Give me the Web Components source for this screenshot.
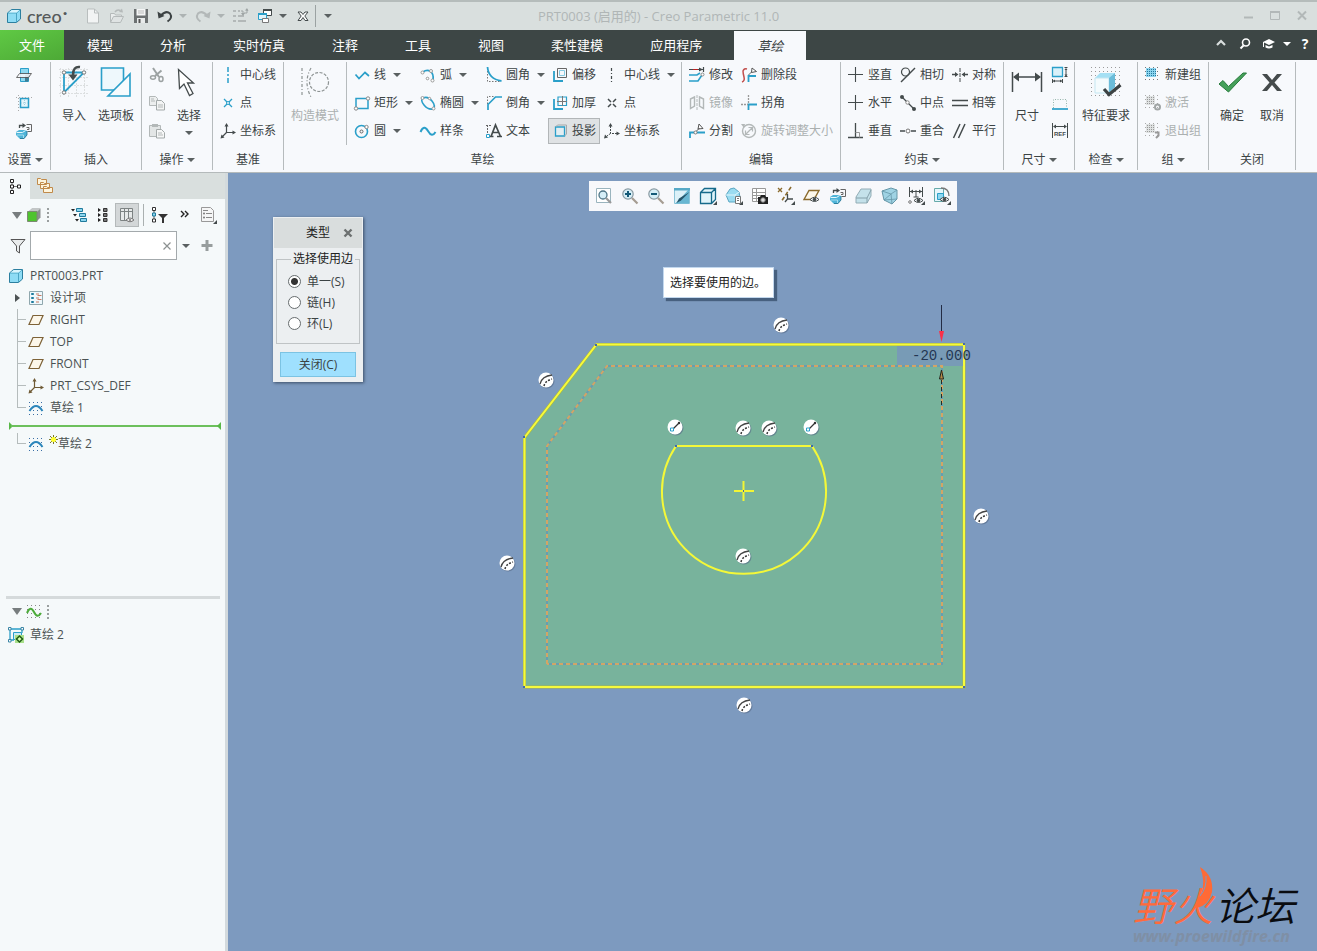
<!DOCTYPE html>
<html lang="zh-CN">
<head>
<meta charset="utf-8">
<title>PRT0003 (启用的) - Creo Parametric 11.0</title>
<style>
  html, body { margin: 0; height: 100%; }
  body { font: 12px/16px "Open Sans", "Noto Sans CJK SC", sans-serif; color: #3b4344; background: #f7f9fc; }
</style>
</head>
<body>
<creo-app></creo-app>
<script>
const C = '#2a9fc9', K = '#444b4c', G = '#b3b8b8', B = '#8a6a2c';
const dots = (x0, y0, x1, y1, step, fill) => {
  let s = '';
  for (let y = y0; y <= y1; y += step) for (let x = x0; x <= x1; x += step) s += `<rect x="${x}" y="${y}" width="1" height="1" fill="${fill}"/>`;
  return s;
};
const cube = `<path d="M1.500 5l4-3.500h9v9.500l-4 3.500h-9z" fill="#8edcf5" stroke="#2c7f9f"/><path d="M1.500 5h9v9.500M10.500 5l4-3.500" fill="none" stroke="#4aa5c4"/><path d="M2.500 4.500l3.500-2.500h7.500l-3 2.500z" fill="#d9f5fd"/>`;
const smallCsys = c => `<path d="M6.500 2v7.500H14M6.500 9.500L2 14" fill="none" stroke="${c}" stroke-width="1.200"/><path d="M6.500 0L4.500 3.500h4zM16 9.500l-3.500-2v4zM0.500 15.500l1-4 3 3z" fill="${c}"/>`;
const eye = `<path d="M7 12.500q4.500-4.500 9 0q-4.500 4-9 0z" fill="#f7f9fc" stroke="${K}"/><circle cx="11.500" cy="12.500" r="1.800" fill="${K}"/>`;
const corner = `<path d="M18 14v4h-4z" fill="${K}"/>`;
const refit = `<path d="M3.500 5V2.500h4" fill="none" stroke="${K}" stroke-width="1.300"/><path d="M10 2.500l-3.500-2.500v5z" fill="${K}"/><path d="M10.500 1.500h5v7h-4M10.500 4.500h2.500v2h-2" fill="none" stroke="#666"/><path d="M0 9l3-2h6l2 1v4l-3 4H4l-4-4z" fill="#4fb4d8"/><path d="M.5 9.500h6l3-2" fill="none" stroke="#e6f8fd"/><path d="M1 12h6.500v3.500" fill="none" stroke="#b9e6f4" stroke-width=".8"/><path d="M4 15.500h4l3-3.500V8" fill="none" stroke="#22708f" stroke-width=".8"/>`;
const ICONS = {
  cube: [16, cube],
  file: [16, `<path d="M2.500 1h7l4 4v10h-11z" fill="#f2f4f4" stroke="#b9bebe"/><path d="M9.500 1v4h4" fill="none" stroke="#b9bebe"/>`],
  open: [16, `<path d="M1.500 14V5.500h4l1 1.500h6v2" fill="#e9ecec" stroke="#b5baba"/><path d="M1.500 14.500l3-6h10l-3 6z" fill="#dfe3e3" stroke="#b5baba"/><path d="M6 4q2-3 5.500-1.500" fill="none" stroke="#b5baba" stroke-width="1.500"/><path d="M14 4.500l-4-.5 3-3.500z" fill="#b5baba"/>`],
  save: [16, `<path d="M1 1h14v14H1z" fill="#6c7172"/><path d="M3.500 1h9v6.500h-9z" fill="#f4f6f6"/><path d="M5 3h6M5 5h6" stroke="#bbb"/><path d="M4 10h8v5H4z" fill="#e8ebeb"/><path d="M5.500 11h2v4h-2z" fill="#555"/>`],
  undo: [16, `<path d="M4 7.500Q9 2 13 5.500Q16 10 10.500 13.500" fill="none" stroke="#3c4243" stroke-width="2"/><path d="M0.500 3.500l1 7 6-2.500z" fill="#3c4243"/>`],
  redo: [16, `<path d="M12 7.500Q7 2 3 5.500Q0 10 5.500 13.500" fill="none" stroke="${G}" stroke-width="2"/><path d="M15.500 3.500l-1 7-6-2.500z" fill="${G}"/>`],
  regen: [16, `<path d="M1 3h3M1 8h3M1 13h3M6 8h6M6 13h8M6 3h2" stroke="${G}" stroke-width="2"/><path d="M9 3h2v3M15 1v4h-3" fill="none" stroke="#9fa5a5"/><path d="M9 5h4l-2 3zM13 2.500l2-2.500 1.500 3z" fill="#9fa5a5"/>`],
  windows: [16, `<path d="M6.500 1.500h8v6h-8z" fill="#fff" stroke="${K}"/><path d="M6 2h9" stroke="${K}" stroke-width="2"/><path d="M1.500 5.500h8v6h-8z" fill="#dff4fb" stroke="${C}"/><path d="M1 6h9" stroke="${C}" stroke-width="2"/><path d="M5.500 10.500h6v4h-6z" fill="#fff" stroke="#777"/>`],
  closewin: [16, `<path d="M3 4h3l2 2.500L10 4h3l-3.200 4 3.200 4.500h-3L8 9.500 6 12.500H3L6.200 8z" fill="#fff" stroke="${K}"/>`],
  min: [16, `<path d="M4 9.500h9" stroke="#b2b8b8" stroke-width="2"/>`],
  max: [16, `<path d="M3.500 3.500h9v8h-9z" fill="none" stroke="#b2b8b8"/><path d="M3 4h10" stroke="#b2b8b8" stroke-width="2"/>`],
  close: [16, `<path d="M4 3.500l8 8M12 3.500l-8 8" stroke="#b2b8b8" stroke-width="2"/>`],
  xdark: [16, `<path d="M4.500 4.500l7 7M11.500 4.500l-7 7" stroke="#6c7070" stroke-width="2.400"/>`],
  xthin: [16, `<path d="M4.500 4.500l7 7M11.500 4.500l-7 7" stroke="#8c9191" stroke-width="1.200"/>`],
  up: [16, `<path d="M4 9l4-4 4 4" fill="none" stroke="#d9dede" stroke-width="2.200"/>`],
  find: [16, `<circle cx="9" cy="6.500" r="3.500" fill="none" stroke="#fff" stroke-width="1.600"/><path d="M6.500 9.500L3.500 12.500" stroke="#fff" stroke-width="2"/>`],
  learn: [16, `<path d="M2 6l6-3 6 3-6 3z" fill="#fff"/><path d="M4.500 9v2.500q3.500 2 7 0V9L8 10.500z" fill="#fff"/><path d="M2.500 6v5" stroke="#fff"/>`],
  setPlane: [16, `<path d="M4.500 1.500h8v13h-8z" fill="#8fd9f0" stroke="${C}"/><path d="M9 8l5-1-2 7.500H9z" fill="#3f7d92"/><path d="M0.500 10.500l3-4h12l-3 4z" fill="#f7f9fc" stroke="#555" opacity=".85"/>`],
  setRefs: [16, `<path d="M4.500 3.500h8v9h-8z" fill="#e3f5fb" stroke="${C}" stroke-width="1.500"/><path d="M2.500 0v16M0 2.500h16" stroke="#aaa" stroke-dasharray="1 2" fill="none"/><path d="M8.500 5v6M5 8h7" stroke="#9fcddd" stroke-dasharray="1 1"/>`],
  refit: [16, refit],
  import: [32, `<path d="M2.500 2v29M10.500 2v29M18.500 2v29M26.500 2v29M1 3.500h30M1 11.500h30M1 19.500h30M1 27.500h30" stroke="#dcdfe0" stroke-dasharray="2 1"/><path d="M6 6.500h20L6 26.500z" fill="none" stroke="${C}" stroke-width="1.800"/><path d="M22 1q-7-1-7 8" fill="none" stroke="${K}" stroke-width="2.500"/><path d="M10.500 8.500h9l-4.500 6z" fill="${K}"/><g fill="#fff" stroke="#777"><circle cx="6" cy="6.500" r="1.700"/><circle cx="26" cy="6.500" r="1.700"/><circle cx="6" cy="26.500" r="1.700"/></g>`],
  palette: [32, `<path d="M1.500 2h22v22h-22z" fill="#eef8fc" stroke="${C}" stroke-width="1.600"/><path d="M30 8v22H8z" fill="#f7fbfd" stroke="${C}" stroke-width="1.600"/>`],
  cut: [16, `<path d="M4 1l6 9M12.500 3.500L6 9" stroke="#9ca2a2" stroke-width="2" fill="none"/><ellipse cx="4" cy="10.500" rx="2.500" ry="1.700" fill="none" stroke="#9ca2a2" stroke-width="1.500"/><ellipse cx="12" cy="12" rx="2" ry="2.500" fill="none" stroke="#9ca2a2" stroke-width="1.500"/>`],
  copy: [16, `<path d="M.5 1.500h6l2 2v7h-8z" fill="#eceeee" stroke="${G}"/><path d="M7.500 5.500h5l3 3v6.500h-8z" fill="#f3f4f4" stroke="#a4aaaa"/><path d="M2 4h3M2 6h4M9 10h5M9 12h5" stroke="${G}"/>`],
  paste: [16, `<path d="M.5 2.500h11v11H.5z" fill="#e3e6e6" stroke="${G}"/><path d="M3 1h6v3H3z" fill="${G}"/><path d="M7.500 6.500h5l3 3v5.500h-8z" fill="#f6f7f7" stroke="#a4aaaa"/><path d="M9 10h4M9 12h5" stroke="${G}"/>`],
  select: [32, `<path d="M5.500 3.500l1 19 4.500-4.500 5.500 11.500 3.500-2-5.500-10.500h6z" fill="#fff" stroke="${K}" stroke-width="1.300"/>`],
  dcenter: [16, `<path d="M8 0v16" stroke="${C}" stroke-width="1.500" stroke-dasharray="5 2 2 2"/>`],
  dpoint: [16, `<path d="M4 4l3 3M12 4L9 7M4 12l3-3M12 12L9 9" stroke="${C}" stroke-width="1.300"/><circle cx="8" cy="8" r="1.500" fill="none" stroke="${C}"/>`],
  csys: [16, smallCsys(K)],
  construct: [32, `<g fill="none" stroke="#8d9393" stroke-width="1.200"><path d="M3 2v29M12 2q-8 14 0 29" stroke-dasharray="3 2 1 2"/><circle cx="20" cy="16" r="9.500" stroke-dasharray="3 1.500"/></g>`],
  line: [16, `<path d="M1.500 7.500l3.500 4 6-6 4 3.500" fill="none" stroke="${C}" stroke-width="1.700"/>`],
  rect: [16, `<path d="M2 3.500h12v10H2z" fill="none" stroke="${C}" stroke-width="1.500"/><circle cx="14" cy="3.500" r="1.700" fill="#fff" stroke="#888"/><circle cx="2" cy="13.500" r="1.700" fill="#fff" stroke="#888"/>`],
  circle: [16, `<circle cx="7.500" cy="8.500" r="6" fill="none" stroke="${C}" stroke-width="1.600"/><circle cx="7.500" cy="8.500" r="1.500" fill="none" stroke="#666"/><circle cx="12.500" cy="4" r="1.700" fill="#fff" stroke="#888"/>`],
  arc: [16, `<path d="M3 5Q7 2 10.500 4.500T13 13" fill="none" stroke="${C}" stroke-width="1.700"/><g fill="#fff" stroke="#999"><circle cx="2.500" cy="5.500" r="1.500"/><circle cx="12.500" cy="13.500" r="1.500"/><circle cx="7.500" cy="11.500" r="1.300"/><circle cx="11" cy="4" r="1.500"/></g>`],
  ellipse: [16, `<path d="M3 3q5-2 9 3t1 8q-5 1-9-4T3 3z" fill="none" stroke="${C}" stroke-width="1.600"/><g fill="#fff" stroke="#999"><circle cx="2.500" cy="3" r="1.500"/><circle cx="13.500" cy="13.500" r="1.500"/><circle cx="9.500" cy="3.500" r="1.200"/></g>`],
  spline: [16, `<path d="M.5 9q3.500-8 7.500-1t7.500 1" fill="none" stroke="${C}" stroke-width="2"/>`],
  fillet: [16, `<path d="M1.500 1v13.500H15" fill="none" stroke="#777" stroke-dasharray="1.500 1.500"/><path d="M1.500 0q1 12 14 14" fill="none" stroke="${C}" stroke-width="1.800"/>`],
  chamfer: [16, `<path d="M1.500 9V1.500H9" fill="none" stroke="#777" stroke-dasharray="1.500 1.500"/><path d="M2 15V9.500L9.500 2H16" fill="none" stroke="${C}" stroke-width="1.700"/>`],
  offset: [16, `<path d="M5.500 1.500h9v9h-9z" fill="none" stroke="#666"/><path d="M2 4v10h9" fill="none" stroke="${C}" stroke-width="1.800"/><path d="M7.500 3.500h5v5h-5z" fill="none" stroke="#88cbe2"/>`],
  thicken: [16, `<path d="M6 2h8.500v8.500H6z" fill="none" stroke="${C}" stroke-width="1.200"/><path d="M2 4v10h9" fill="none" stroke="${C}" stroke-width="1.800"/><path d="M10.500 1v10M5 6.500h10" stroke="#777"/>`],
  text: [16, `<path d="M1.500 13V2M0 2.500h5" stroke="#666" stroke-dasharray="2 1"/><path d="M5 13.500L9.500 2l5 11.500M7 9.500h5.500M3.500 13.500h4M11 13.500h5" fill="none" stroke="${K}" stroke-width="1.700"/><path d="M.5 11.500h3v3h-3z" fill="#fff" stroke="${C}"/>`],
  project: [16, `<path d="M3.500 4h9v9h-9z" fill="#e3eef2" stroke="${C}" stroke-width="1.300"/><path d="M3.500 4l2-2h9v9l-2 2" fill="none" stroke="#a5a9aa"/>`],
  center: [16, `<path d="M7.500 1v14" stroke="${K}" stroke-width="1.200" stroke-dasharray="3 2 1 2"/>`],
  point: [16, `<path d="M4 4l3 3M12 4L9 7M4 12l3-3M12 12L9 9" stroke="${K}" stroke-width="1.500"/>`],
  csysd: [16, `<path d="M6.500 3v7.500H13M6.500 10.500L3 13" fill="none" stroke="${K}" stroke-dasharray="2 1"/><path d="M6.500 0L4.500 3.500h4zM16 10.500l-3.500-2v4zM0 15.500l1-4 3 3z" fill="${K}"/>`],
  modify: [16, `<path d="M0 2.500h15M14.500 0v5" fill="none" stroke="${K}" stroke-width="1.200"/><path d="M14 2.500l-4-2v4z" fill="${K}"/><path d="M4 2.500h5" stroke="#b22"/><path d="M0 8h8l3-2M0 14h9l4-6" fill="none" stroke="${C}" stroke-width="1.600"/><circle cx="13.500" cy="7.500" r="1.500" fill="#fff" stroke="#888"/>`],
  delseg: [16, `<path d="M1 15q3-1 2-5t-1-6q1-3 4-2" fill="none" stroke="#c2504e" stroke-width="1.500"/><path d="M7.500 15V9h7.500" fill="none" stroke="${C}" stroke-width="1.800"/><path d="M7.500 8l4-4" stroke="#666"/><path d="M11 1l4.500 3.500-5 1z" fill="#fff" stroke="#555"/>`],
  mirror: [16, `<path d="M1.500 4l4-2v9l-4 2.500zM14.500 4l-4-2v9l4 2.500z" fill="none" stroke="${G}" stroke-width="1.400"/><path d="M8 0v16" stroke="${G}" stroke-dasharray="3 1"/>`],
  cornr: [16, `<path d="M7.500 15V9.500H16" fill="none" stroke="${C}" stroke-width="1.800"/><path d="M7.500 0v8M0 9.500h7" stroke="#999" stroke-width="1.300" stroke-dasharray="2 1"/>`],
  divide: [16, `<path d="M1 15V9.500h4M8 9.500h8" fill="none" stroke="${C}" stroke-width="1.800"/><circle cx="6.500" cy="9.500" r="1.500" fill="#fff" stroke="#777"/><path d="M7.500 8l3-3M10 1l4 4.500-5 .5z" fill="#fff" stroke="#555"/>`],
  rotate: [16, `<circle cx="8" cy="8" r="6.500" fill="none" stroke="${G}" stroke-width="1.400"/><path d="M5 11l6-6M7.500 4.500h4v4M4.500 7.500v4h4" fill="none" stroke="${G}" stroke-width="1.200"/><path d="M0 1h4l-1 4z" fill="${G}"/>`],
  plus: [16, `<path d="M7.500 0v15M0 7.500h15" stroke="${K}" stroke-width="1.100"/>`],
  perp: [16, `<path d="M7.500 0v14M0 14.500h15" stroke="${K}" stroke-width="1.300"/><path d="M7.500 9.500h4v5" fill="none" stroke="#999"/>`],
  tangent: [16, `<circle cx="5.500" cy="5" r="4" fill="none" stroke="${K}" stroke-width="1.200"/><path d="M1 15L15 1" stroke="${K}" stroke-width="1.400"/>`],
  mid: [16, `<path d="M2.500 2.500l11 11" stroke="${K}" stroke-width="1.300"/><circle cx="2" cy="2" r="2" fill="${K}"/><circle cx="14" cy="14" r="2" fill="${K}"/><circle cx="7.500" cy="7.500" r="1.700" fill="#fff" stroke="#888"/>`],
  coin: [16, `<path d="M0 8h5M11 8h5" stroke="${K}" stroke-width="1.500"/><circle cx="8" cy="8" r="2" fill="#fff" stroke="#777"/>`],
  sym: [16, `<path d="M8 1v14" stroke="${K}" stroke-dasharray="4 1"/><path d="M0 7.500h4M12 7.500h4" stroke="${K}" stroke-width="1.500"/><path d="M6.500 7.500L3 5v5zM9.500 7.500L13 5v5z" fill="${K}"/>`],
  equal: [16, `<path d="M0 5.500h16M0 10.500h16" stroke="${K}" stroke-width="1.500"/>`],
  para: [16, `<path d="M1.500 15L8 1M6.500 15L13 1" stroke="${K}" stroke-width="1.500"/>`],
  dim: [32, `<path d="M1.500 6v20M30.500 6v20M5 11h22" stroke="${K}" stroke-width="1.500"/><path d="M2 11l6-4.500v9zM30 11l-6-4.500v9z" fill="${K}"/>`],
  perim: [16, `<path d="M.5.500h10v9H.5z" fill="#d9f1fa" stroke="${C}" stroke-width="1.300"/><path d="M12.500.5h3M12.500 9.500h3M14 2v7M.5 12v4M10.500 12v4M1 14h9" fill="none" stroke="${K}"/><path d="M1 14l2-1.500v3zM10 14l-2-1.500v3zM14 1l-1.500 2h3zM14 9.500L12.500 7.500h3z" fill="${K}"/>`],
  baseline: [16, `<path d="M1.500 13V4.500h13V13" fill="none" stroke="#98b6ad" stroke-dasharray="1 1.500"/><path d="M0 14h16" stroke="${C}" stroke-width="1.700"/>`],
  ref: [16, `<path d="M.5 0v15M15.500 0v15M2 3.500h12" stroke="${K}"/><path d="M1 3.500L4 1.500v4zM15 3.500l-3-2v4z" fill="${K}"/><text x="2" y="13" font-family="Liberation Sans, sans-serif" font-size="6" font-weight="700" fill="${K}">REF</text>`],
  check: [32, dots(1, 1, 31, 31, 4, '#9a9a9a') + `<path d="M5 12l5-5h15v14l-6 6H5z" fill="#a5e0f4"/><path d="M5 12h14v15H5z" fill="#f4fbfd" stroke="#c4e6f1"/><path d="M19 12l6-5v14l-6 6z" fill="#6bbcd9"/><path d="M14 23l5 5.500L30.500 19" fill="none" stroke="#3c4243" stroke-width="3.200"/>`],
  newgrp: [16, dots(0, 0, 15, 15, 4, '#777') + `<path d="M1 1h10v9H1z" fill="#8dd5ee"/>` + dots(2, 2, 10, 9, 2, '#2278a0')],
  actgrp: [16, dots(0, 0, 15, 15, 4, '#aaa') + `<path d="M1 1h9v9H1z" fill="#dfe2e2"/>` + dots(2, 2, 9, 9, 2, '#999') + `<circle cx="12.500" cy="12" r="2.500" fill="none" stroke="#a0a5a5" stroke-width="2"/>`],
  exitgrp: [16, dots(0, 0, 15, 15, 4, '#aaa') + `<path d="M1 1h9v9H1z" fill="#dfe2e2"/>` + dots(2, 2, 9, 9, 2, '#999') + `<path d="M10 9.500h3.500v3L11 15" fill="none" stroke="#999" stroke-width="2"/>`],
  ok: [32, `<path d="M3 18l4-3.500 5.500 6L27 7h3.500L12.500 26z" fill="#45a05a" stroke="#277a3b"/>`],
  cancel: [32, `<path d="M6 8h5l5 6 5-6h5l-7.500 8.500L26 25h-5l-5-6-5 6H6l7.500-8.500z" fill="#454b4c"/>`],
  treeTab: [16, `<path d="M5 3v11M5 8.500h5" stroke="#777"/><path d="M3.500 1.500h3v3h-3zM3.500 7h3v3h-3zM3.500 12.500h3v3h-3zM10.500 7h3v3h-3z" fill="#fff" stroke="#222"/>`],
  folders: [16, `<g fill="#fdf4dc" stroke="#c08a4a"><path d="M.5.500h3l1 1h5v5h-9zM3.500 4.500h3l1 1h5v5h-9zM6.500 8.500h3l1 1h5v5h-9z"/></g>`],
  gcube: [16, `<path d="M2 5l4-3.500h8.500v9L11 14" fill="#8b8f8f"/><path d="M2 5l4-3.500h8.500L11 5z" fill="#c3c7c7"/><path d="M1.500 4.500h9.500v10H1.500z" fill="#4fc32f" stroke="#7c8a72"/>`],
  expand: [16, `<path d="M0 2h4l-2 2.500zM2 7h4l-2 2.500zM4 12h4l-2 2.500z" fill="#222"/><path d="M5.500 1.500h6v3h-6zM8.500 6.500h6v3h-6zM9.500 11.500h6v3h-6z" fill="#8bd5ee" stroke="#1f7a9c"/>`],
  collapse: [16, `<path d="M3 1v4l3-2zM3 6v4l3-2zM3 11v4l3-2z" fill="#222"/><path d="M8.500 1.500H12v3H8.500zM8.500 6.500H12v3H8.500zM8.500 11.500H12v3H8.500z" fill="#777" stroke="#333"/>`],
  columns: [16, `<path d="M1.500 1.500h12v12h-12zM1.500 4.500h12M5.500 1.500v12M9.500 1.500v12" fill="#e6e9e9" stroke="#7d8383"/><path d="M7 13q4-4 8 0q-4 3.500-8 0z" fill="#eee" stroke="#777"/><circle cx="11" cy="13" r="1" fill="#777"/>`],
  filterTree: [16, `<path d="M2 3v11" stroke="#555"/><path d="M.5.500h3v3h-3z" fill="#fff" stroke="#333"/><path d="M.5 6h3v3h-3z" fill="#8bd5ee" stroke="#1f7a9c"/><path d="M.5 12h3v3h-3z" fill="#fff" stroke="#333"/><path d="M6 7h10l-4 4v5h-2v-5z" fill="#333"/>`],
  more: [16, `<path d="M5 4l3 3-3 3M9 4l3 3-3 3" fill="none" stroke="#222" stroke-width="1.400"/>`],
  settings: [18, `<path d="M2.500 1.500h9l3 3v11h-12z" fill="#f5f6f6" stroke="#999"/><path d="M7 7.500h6M7 11.500h6M4 4.500h5" stroke="#888"/><circle cx="5" cy="7.500" r="1" fill="#777"/><circle cx="5" cy="11.500" r="1" fill="#777"/>${corner}`],
  funnel: [16, `<path d="M1 1.500h14L9.500 8v7l-3-2V8z" fill="#e9ecec" stroke="#555"/>`],
  add: [16, `<path d="M8 2v11M2.500 7.500h11" stroke="#979d9d" stroke-width="3"/>`],
  design: [16, `<path d="M1.500 1.500h13v13h-13z" fill="#eef8fc" stroke="#8fa7ad"/><path d="M3.500 3.500h2v1h-2zM3.500 7.500h2v1h-2zM3.500 11.500h2v1h-2z" fill="#8bd5ee" stroke="#1f7a9c"/><path d="M8 4h3M9.500 5.500h4M8 8h3M9.500 9.500h4M8 12h3" stroke="#c97a62"/>`],
  plane: [16, `<path d="M5 3.500h10l-4 9H1z" fill="#fcf7ea" stroke="#7d6237" stroke-width="1.200"/>`],
  tcsys: [16, smallCsys('#6f5a34')],
  sketch: [16, dots(1, 2, 16, 15, 4, '#3a6ea5') + `<path d="M1.500 11q6.500-10 13 0" fill="none" stroke="#2c86bb" stroke-width="2"/>`],
  star: [16, `<path d="M4.500 0v9M0 4.500h9M1 1l7 7M8 1L1 8" stroke="#77772a"/><circle cx="4.500" cy="4.500" r="2.500" fill="#ffff2b"/>`],
  wave: [16, dots(1, 1, 16, 16, 4, '#888') + `<path d="M1 9q3.500-8 7-1t7 1" fill="none" stroke="#4cab3a" stroke-width="2"/>`],
  section: [16, `<path d="M2 2h12v4M2 2v11h4" fill="none" stroke="${C}" stroke-width="1.300"/><path d="M5.500 5.500h8v7h-8z" fill="#cdebf5" stroke="${C}"/><g fill="#fff" stroke="#3c86a5"><path d="M.5.500h2.500v2.500H.5zM13 .5h2.500v2.500H13zM.5 12.500h2.500v2.500H.5z"/></g><path d="M7 8h9v8H7z" fill="#a9e08a"/><path d="M11.500 9l3 3-3 3-3-3z" fill="#d9ffb0" stroke="#1d5c14" stroke-width="1.500"/>`],
  zfit: [18, `<path d="M1.500 1.500h14v14h-14z" fill="#fff" stroke="#9ab4be"/><circle cx="8" cy="8" r="4" fill="#d6eef7" stroke="#4e7486" stroke-width="1.300"/><path d="M11 11l5 5" stroke="#999" stroke-width="2.200"/>`],
  zin: [18, `<path d="M11 11l5.500 5.500" stroke="#a59c92" stroke-width="2.200"/><circle cx="7" cy="7" r="5.200" fill="#d6eef7" stroke="#8a9aa2" stroke-width="1.200"/><path d="M4 7h6M7 4v6" stroke="#155a78" stroke-width="2"/>`],
  zout: [18, `<path d="M11 11l5.500 5.500" stroke="#a59c92" stroke-width="2.200"/><circle cx="7" cy="7" r="5.200" fill="#d6eef7" stroke="#8a9aa2" stroke-width="1.200"/><path d="M4 7h6" stroke="#155a78" stroke-width="2"/>`],
  repaint: [18, `<path d="M1.500 1.500h15v15h-15z" fill="#dcf1f8" stroke="#8cc4d8"/><path d="M16 2v14.500H2L5 14z" fill="#69b7d2"/><path d="M1 1h16v2.500H1z" fill="#57a9c6"/><path d="M16.500 5L8 13.500l-4.500 2.500 2.500-4.500z" fill="#27566a"/>`],
  display: [18, `<path d="M1.500 5.500l4-4h11v11l-4 4h-11zM1.500 5.500h11v11M12.500 5.500l4-4" fill="#e1f4fa" stroke="#166a8b" stroke-width="1.300"/>${corner}`],
  views: [18, `<path d="M1 8l4-6 4-1 5 4 1 5-4 5H4z" fill="#9bdcf1" stroke="#5aa6c2"/><path d="M1 8h9l4-3M10 8l1 7" fill="none" stroke="#e3f6fc"/><path d="M10.500 9.500h5v7h-5z" fill="#fff" stroke="#777"/><path d="M12 11.500h2M12 13.500h2" stroke="#777"/>${corner}`],
  snap: [18, `<path d="M1.500 1.500h13v13h-13zM1.500 5.500h13M1.500 8.500h13M1.500 11.500h13M5.500 1.500v13" fill="#fff" stroke="#999"/><path d="M7 10h2l1-2h4l1 2h2v7H7z" fill="#222"/><circle cx="12" cy="13" r="2.300" fill="#ddd" stroke="#777"/>`],
  datums: [18, `<path d="M1 1l4 4M5 1L1 5" stroke="${B}" stroke-width="1.300"/><path d="M14 0L4 15" stroke="${B}" stroke-width="1.600" stroke-dasharray="4 2"/><path d="M10.500 7v5H16M10.500 12L8 15" fill="none" stroke="${K}" stroke-width="1.300"/>${corner}`],
  planeEye: [18, `<path d="M6 3.500h10l-5 9H1z" fill="#fcf7ea" stroke="${B}" stroke-width="1.400"/>${eye}`],
  sectv: [18, `<path d="M1 10l5-8h10v7l-4 7H1z" fill="#c4e1ea" stroke="#93adb6"/><path d="M1 11h11l4-8M12 11v5" fill="none" stroke="#84a0aa"/>`],
  persp: [18, `<path d="M1 4l9-3 6 2v9l-5 5-8-4z" fill="#9fd3e4" stroke="#6697a8"/><path d="M1 4l9 3 6-4M10 7l1 10M3 13l7-6M3 13l13-1" fill="none" stroke="#6697a8" stroke-width=".8"/>`],
  dimEye: [18, `<path d="M2.500 0v10M15.500 0v10M3 4.500h12M9 3v7M6.500 10h5" stroke="${K}" fill="none"/><path d="M3 4.500L6 2.500v4zM15 4.500l-3-2v4z" fill="${K}"/><circle cx="3" cy="15" r="1.300" fill="none" stroke="#777"/><g transform="translate(0 1)">${eye}</g>${corner}`],
  viewEye: [18, `<path d="M1.500 1.500h9v13h-9z" fill="#e6f6fb" stroke="#6aa"/><path d="M4.500 6.500h6v6h-6z" fill="#8fd7ef" stroke="${C}"/><path d="M8 1q8 0 8 8" fill="none" stroke="#777" stroke-width="1.300"/>${eye}${corner}`]
};

const define = (name, css, html) => customElements.define(name, class extends HTMLElement {
  constructor() { super(); this.attachShadow({ mode: 'open' }); }
  connectedCallback() {
    this.shadowRoot.innerHTML = `<style>*{box-sizing:border-box}button{font:inherit;color:inherit;background:none;border:0;padding:0;margin:0}${css}</style>` + (typeof html === 'function' ? html(this) : html);
  }
});

define('app-icon', `:host{display:block;flex:none} svg{display:block;overflow:visible}`, el => {
  const [size, body] = ICONS[el.getAttribute('name')];
  return `<svg width="${size}" height="${size}" viewBox="0 0 ${size} ${size}" aria-hidden="true">${body}</svg>`;
});

define('drop-arrow', `:host{display:block;flex:none;width:0;height:0;border:4px solid transparent;border-top-color:var(--arrow,#5a6061);border-bottom:0}`, '');

/* Icon-only button; its host sets the width of the hit area. */
define('icon-button', `:host{display:flex;width:24px;height:24px;flex:none} button{flex:1;display:grid;place-items:center} :host([pressed]) button{background:#d3d7d8;border:1px solid #b4b9ba}`,
  el => `<button aria-label="${el.getAttribute('label')}">${el.hasAttribute('icon') ? `<app-icon name="${el.getAttribute('icon')}"></app-icon>` : '<drop-arrow></drop-arrow>'}</button>`);

/* Captioned ribbon command, either one row or large. */
define('tool-button', `
  :host{display:flex;height:28px;align-items:center}
  button{display:flex;align-items:center;gap:4px;white-space:nowrap;height:26px}
  drop-arrow{margin-left:3px}
  :host([pressed]) button{background:#dfe2e4;border:1px solid #b2b6b8;margin-left:-4px;padding:0 3px}
  :host([disabled]) button{color:#abb0b0}
  :host([large]){height:84px;width:var(--tool-width,42px);flex:none;align-items:flex-start;justify-content:center}
  :host([large]) button{flex-direction:column;gap:10px;padding-top:5px;height:84px}
  :host([large]) drop-arrow{margin:-3px 0 0}`,
  el => `<button ${el.hasAttribute('disabled') ? 'disabled' : ''}><app-icon name="${el.getAttribute('icon')}"></app-icon><span><slot></slot></span>${el.hasAttribute('menu') ? '<drop-arrow></drop-arrow>' : ''}</button>`);

define('ribbon-group', `
  :host{display:flex;flex-direction:column;flex:none;box-sizing:border-box;width:var(--w);height:108px;border-right:1px solid #b6bbbd}
  .tools{display:flex;flex:none;height:84px;padding-left:var(--pad,7px);margin-top:-1px}
  .label{display:flex;flex:none;align-items:center;justify-content:center;gap:3px;height:30px}`,
  el => `<div class="tools"><slot></slot></div><div class="label">${el.getAttribute('label')}${el.hasAttribute('menu') ? '<drop-arrow></drop-arrow>' : ''}</div>`);

define('tool-grid', `:host{display:grid;grid-template-rows:repeat(3,28px);grid-auto-flow:column;grid-template-columns:var(--cols,none);justify-items:start;align-items:center}`, `<slot></slot>`);

define('title-bar', `
  :host{display:grid;grid-template-columns:1fr auto 1fr;align-items:center;height:30px;background:#d9dfde;border-top:2px solid #b5bcbb;box-sizing:border-box}
  .left,.right{display:flex;align-items:center}
  .brand{display:flex;flex:none;align-items:center;gap:5px;width:81px;padding-left:6px;font:500 18px/24px Lato,sans-serif;color:#55595a}
  .brand sup{font-size:8px;line-height:8px;margin-left:-4px;align-self:flex-start;padding-top:5px}
  .arrow{width:12px} .gap{margin-left:2px} .tick{margin-left:1px}
  .faint{--arrow:#adb3b3} .sep{width:1px;height:22px;flex:none;background:#9ba2a2}
  h1{margin:0;font:13px/20px "Open Sans","Noto Sans CJK SC",sans-serif;color:#b0b6b6;white-space:nowrap}
  .right{justify-content:flex-end;gap:3px;padding-right:3px}`, `
  <div class="left"><span class="brand"><app-icon name="cube"></app-icon>creo<sup>•</sup></span>
    <icon-button icon="file" label="新建"></icon-button><icon-button icon="open" label="打开"></icon-button><icon-button icon="save" label="保存"></icon-button>
    <icon-button icon="undo" label="撤消"></icon-button><icon-button class="arrow faint" label="撤消列表"></icon-button>
    <icon-button class="gap" icon="redo" label="重做"></icon-button><icon-button class="arrow faint" label="重做列表"></icon-button>
    <icon-button class="tick" icon="regen" label="重新生成"></icon-button><icon-button class="tick" icon="windows" label="窗口"></icon-button><icon-button class="arrow" label="窗口列表"></icon-button>
    <icon-button class="gap" icon="closewin" label="关闭窗口"></icon-button><span class="sep"></span><icon-button label="自定义"></icon-button></div>
  <h1>PRT0003 (启用的) - Creo Parametric 11.0</h1>
  <div class="right"><icon-button icon="min" label="最小化"></icon-button><icon-button icon="max" label="最大化"></icon-button><icon-button icon="close" label="关闭"></icon-button></div>`);

define('ribbon-tabs', `
  :host{display:flex;height:30px;background:#3d4645;color:#fff;font-size:13px;--arrow:#fff}
  .tabs{display:flex;gap:1px;flex:1}
  .tabs button{padding:0 23px;white-space:nowrap}
  .tabs .file{background:linear-gradient(160deg,#5fc944,#4da936);padding:0 19px;margin-right:-1px}
  .tabs .on{background:#f7f9fc;color:#3b4344;font-style:italic;margin:1px 0 0 8px}
  .tools{display:flex;align-items:center;padding-bottom:3px}
  .arrow{width:12px} .help{width:24px;font:700 14px/20px "Open Sans",sans-serif}`, `
  <div class="tabs" role="tablist"><button class="file">文件</button><button role="tab">模型</button><button role="tab">分析</button><button role="tab">实时仿真</button><button role="tab">注释</button><button role="tab">工具</button><button role="tab">视图</button><button role="tab">柔性建模</button><button role="tab">应用程序</button><button role="tab" class="on" aria-selected="true">草绘</button></div>
  <div class="tools"><icon-button icon="up" label="最小化功能区"></icon-button><icon-button icon="find" label="搜索"></icon-button><icon-button icon="learn" label="学习"></icon-button><icon-button class="arrow" label="学习列表"></icon-button><button class="help" aria-label="帮助">?</button></div>`);

define('ribbon-bar', `
  :host{display:flex;height:113px;padding-top:2px;background:#f7f9fc;border-bottom:1px solid #b4babb;box-sizing:border-box;overflow:hidden}
  .rule{width:1px;height:83px;background:#b6bbbd;margin:1px 7px 0 0}
  .wide{--tool-width:62px} .pair{--tool-width:40px}`, `
  <ribbon-group label="设置" menu style="--w:51px;--pad:12px"><tool-grid><icon-button icon="setPlane" label="草绘设置"></icon-button><icon-button icon="setRefs" label="参考"></icon-button><icon-button icon="refit" label="草绘视图"></icon-button></tool-grid></ribbon-group>
  <ribbon-group label="插入" style="--w:91px;--pad:2px"><tool-button large icon="import">导入</tool-button><tool-button large icon="palette">选项板</tool-button></ribbon-group>
  <ribbon-group label="操作" menu style="--w:71px;--pad:3px"><tool-grid><icon-button icon="cut" label="剪切"></icon-button><icon-button icon="copy" label="复制"></icon-button><icon-button icon="paste" label="粘贴"></icon-button></tool-grid><tool-button class="pair" large menu icon="select">选择</tool-button></ribbon-group>
  <ribbon-group label="基准" style="--w:71px"><tool-grid><tool-button icon="dcenter">中心线</tool-button><tool-button icon="dpoint">点</tool-button><tool-button icon="csys">坐标系</tool-button></tool-grid></ribbon-group>
  <ribbon-group label="草绘" style="--w:398px;--pad:0px"><tool-button class="wide" large disabled icon="construct">构造模式</tool-button><span class="rule"></span>
    <tool-grid style="--cols:66px 66px 66px 52px 76px">
      <tool-button menu icon="line">线</tool-button><tool-button menu icon="rect">矩形</tool-button><tool-button menu icon="circle">圆</tool-button>
      <tool-button menu icon="arc">弧</tool-button><tool-button menu icon="ellipse">椭圆</tool-button><tool-button icon="spline">样条</tool-button>
      <tool-button menu icon="fillet">圆角</tool-button><tool-button menu icon="chamfer">倒角</tool-button><tool-button icon="text">文本</tool-button>
      <tool-button icon="offset">偏移</tool-button><tool-button icon="thicken">加厚</tool-button><tool-button pressed icon="project">投影</tool-button>
      <tool-button menu icon="center">中心线</tool-button><tool-button icon="point">点</tool-button><tool-button icon="csysd">坐标系</tool-button>
    </tool-grid></ribbon-group>
  <ribbon-group label="编辑" style="--w:159px"><tool-grid style="--cols:52px 98px">
      <tool-button icon="modify">修改</tool-button><tool-button disabled icon="mirror">镜像</tool-button><tool-button icon="divide">分割</tool-button>
      <tool-button icon="delseg">删除段</tool-button><tool-button icon="cornr">拐角</tool-button><tool-button disabled icon="rotate">旋转调整大小</tool-button></tool-grid></ribbon-group>
  <ribbon-group label="约束" menu style="--w:163px"><tool-grid style="--cols:52px 52px 50px">
      <tool-button icon="plus">竖直</tool-button><tool-button icon="plus">水平</tool-button><tool-button icon="perp">垂直</tool-button>
      <tool-button icon="tangent">相切</tool-button><tool-button icon="mid">中点</tool-button><tool-button icon="coin">重合</tool-button>
      <tool-button icon="sym">对称</tool-button><tool-button icon="equal">相等</tool-button><tool-button icon="para">平行</tool-button></tool-grid></ribbon-group>
  <ribbon-group label="尺寸" menu style="--w:71px;--pad:2px"><tool-button large icon="dim">尺寸</tool-button><tool-grid><icon-button icon="perim" label="周长"></icon-button><icon-button icon="baseline" label="基线"></icon-button><icon-button icon="ref" label="参考尺寸"></icon-button></tool-grid></ribbon-group>
  <ribbon-group label="检查" menu style="--w:63px;--pad:0px"><tool-button class="wide" large icon="check">特征要求</tool-button></ribbon-group>
  <ribbon-group label="组" menu style="--w:71px"><tool-grid><tool-button icon="newgrp">新建组</tool-button><tool-button disabled icon="actgrp">激活</tool-button><tool-button disabled icon="exitgrp">退出组</tool-button></tool-grid></ribbon-group>
  <ribbon-group label="关闭" style="--w:87px;--pad:3px"><tool-button class="pair" large icon="ok">确定</tool-button><tool-button class="pair" large icon="cancel">取消</tool-button></ribbon-group>`);

define('tree-item', `
  :host{display:flex;align-items:center;height:22px;color:#4a5152}
  .guide{width:28px;height:22px;display:flex;flex-direction:column;padding-left:17px;flex:none}
  .guide i{display:block;height:11px;width:9px;border:0 solid #b5bcbc;border-left-width:1px}
  .guide i:first-child{border-bottom-width:1px}
  :host([last]) .guide i:last-child{border-color:transparent}
  :host([root]){padding-left:8px}
  .toggle{width:28px;height:22px;display:grid;place-items:center;padding-left:6px;flex:none}
  .toggle::before{content:"";border:4px solid transparent;border-left:5px solid #4d5354;border-right:0}
  app-icon{margin-right:6px} .new{width:16px;margin:-2px -7px 0 -1px}
  span{white-space:nowrap}`, el => `
  ${el.hasAttribute('root') ? '' : el.hasAttribute('closed') ? '<button class="toggle" aria-label="展开"></button>' : '<div class="guide"><i></i><i></i></div>'}
  <app-icon name="${el.getAttribute('icon')}"></app-icon>${el.hasAttribute('fresh') ? '<app-icon class="new" name="star"></app-icon>' : ''}<span><slot></slot></span>`);

define('model-panel', `
  :host{display:flex;flex-direction:column;width:228px;background:#f5f9fa;border-right:3px solid #d3dadd;box-sizing:border-box}
  .tabs{display:flex;height:26px;background:#d9dfde;align-items:center}
  .tabs icon-button{width:30px;height:26px} .tabs .on{background:#f5f9fa}
  .bar{display:flex;align-items:center;height:32px;padding:0 5px 0 11px}
  .caret{flex:none;width:11px;height:24px;display:grid;place-items:center}
  .caret::before{content:"";border:5px solid transparent;border-top:7px solid #777d7e;border-bottom:0}
  .grip{flex:none;width:2px;height:14px;margin:0 18px 0 1px;background:repeating-linear-gradient(#9a9f9f 0 2px,transparent 2px 4px)}
  .vr{flex:none;width:1px;height:22px;background:#aab0b0;margin:0 4px}
  .search{display:flex;align-items:center;height:29px;padding-left:6px}
  .field{display:flex;align-items:center;width:147px;height:29px;background:#fff;border:1px solid #a3a9ac;}
  input{flex:1;min-width:0;border:0;outline:0;background:none;font:inherit;padding:0 6px;height:24px}
  .field icon-button{width:18px} .drop{width:18px}
  .tree{display:flex;flex-direction:column;margin-top:5px}
  .insert{height:14px;display:flex;align-items:center;margin:0 4px 0 9px}
  .insert::before,.insert::after{content:"";border:4px solid transparent;border-left:4px solid #58b847;border-right:0}
  .insert::after{border-left:0;border-right:4px solid #58b847}
  .insert i{flex:1;height:2px;background:#6cc05c;margin:0 -2px}
  .split{height:3px;margin:141px 5px 0 6px;background:#d5dadb}
  .lower{height:25px} .filter{display:grid;place-items:center;width:24px}`, `
  <div class="tabs"><icon-button class="on" icon="treeTab" label="模型树"></icon-button><icon-button icon="folders" label="文件夹浏览器"></icon-button></div>
  <div class="bar"><button class="caret" aria-label="折叠"></button><icon-button icon="gcube" label="模型"></icon-button><span class="grip"></span>
    <icon-button icon="expand" label="全部展开"></icon-button><icon-button icon="collapse" label="全部折叠"></icon-button><icon-button pressed icon="columns" label="树列"></icon-button><span class="vr"></span><icon-button icon="filterTree" label="树过滤器"></icon-button><icon-button icon="more" label="更多"></icon-button><icon-button icon="settings" label="设置"></icon-button></div>
  <div class="search"><label class="filter" for="q"><app-icon name="funnel"></app-icon></label><div class="field"><input id="q" type="text" aria-label="过滤模型树"><icon-button icon="xthin" label="清除"></icon-button></div><icon-button class="drop" label="过滤选项"></icon-button><icon-button icon="add" label="添加"></icon-button></div>
  <div class="tree"><tree-item root icon="cube">PRT0003.PRT</tree-item><tree-item closed icon="design">设计项</tree-item><tree-item icon="plane">RIGHT</tree-item><tree-item icon="plane">TOP</tree-item><tree-item icon="plane">FRONT</tree-item><tree-item icon="tcsys">PRT_CSYS_DEF</tree-item><tree-item last icon="sketch">草绘 1</tree-item>
  <div class="insert"><i></i></div><tree-item last fresh icon="sketch">草绘 2</tree-item></div>
  <div class="split"></div>
  <div class="bar lower"><button class="caret" aria-label="折叠"></button><icon-button icon="wave" label="草绘"></icon-button><span class="grip"></span></div>
  <tree-item root icon="section">草绘 2</tree-item>`);

define('view-toolbar', `:host{display:flex;padding:3px 2px;background:#f7f8fb} icon-button{width:26px}`,
  () => [['zfit', '重新调整'], ['zin', '放大'], ['zout', '缩小'], ['repaint', '重画'], ['display', '显示样式'], ['views', '已保存方向'], ['snap', '视图管理器'], ['datums', '基准显示过滤器'], ['planeEye', '平面显示'], ['refit', '草绘视图'], ['sectv', '修剪模型'], ['persp', '透视图'], ['dimEye', '草绘器显示'], ['viewEye', '注释显示']]
    .map(([i, l]) => `<icon-button icon="${i}" label="${l}"></icon-button>`).join(''));

define('type-dialog', `
  :host{display:block;width:90px;background:#eceff1;box-shadow:1px 1px 3px #3c4e66;padding-bottom:5px;box-sizing:border-box}
  header{display:flex;align-items:center;height:31px;background:#d9dddd;padding-left:32px;border:1px solid #eceff1;border-bottom:0;color:#222}
  header icon-button{margin-left:6px}
  fieldset{margin:2px 3px 0;padding:3px 0 9px 11px;border:1px solid #bfc3c5;min-width:0}
  legend{padding:0 2px;margin-left:3px;line-height:18px;color:#222;white-space:nowrap}
  label{display:flex;align-items:center;gap:6px;height:21px;white-space:nowrap}
  input{appearance:none;width:13px;height:13px;margin:0;border:1px solid #666c6e;border-radius:50%;background:#fff}
  input:checked{background:radial-gradient(circle,#333 0 3px,#fff 4px)}
  .done{display:block;width:76px;height:25px;margin:8px auto 0;background:#9fe0fe;border:1px solid #7cc3e3}`, `
  <header>类型<icon-button icon="xdark" label="关闭对话框"></icon-button></header>
  <fieldset><legend>选择使用边</legend><label><input type="radio" name="edge" checked>单一(S)</label><label><input type="radio" name="edge">链(H)</label><label><input type="radio" name="edge">环(L)</label></fieldset>
  <button class="done">关闭(C)</button>`);

define('hint-tip', `:host{display:block;background:#fff;border:1px solid #c3d8ee;padding:7px 7px 6px 6px;color:#222;box-shadow:3px 3px 1px #47607f;white-space:nowrap}`, `<slot></slot>`);

define('forum-mark', `
  :host{display:grid;justify-items:start;gap:2px;font-family:"Noto Sans CJK SC",sans-serif}
  .name{font-size:40px;line-height:44px;font-weight:350;font-style:italic;color:#0a0c10;display:flex;gap:2px;position:relative}
  .name b{font-weight:350;color:#ff6a3c}
  svg{position:absolute;left:59px;top:-15px}
  small{font:italic 700 16px/16px "Open Sans",sans-serif;color:#7f8fa5}`, `
  <div class="name"><b>野火</b>论坛<svg width="24" height="44" viewBox="0 0 24 44"><path d="M8 0Q22 9 20 25Q17 38 5 41Q4 34 9 27Q14 15 8 0z" fill="#ff6a35"/><path d="M14 9q1 12-6 20" stroke="#7d9abf" fill="none"/></svg></div><small>www.proewildfire.cn</small>`);

define('sketch-view', `
  :host{display:grid;grid-template-rows:auto 1fr;justify-items:center;position:relative;background:#7d9abf;overflow:hidden;min-width:0}
  .draw{position:absolute;inset:0;width:100%;height:100%}
  view-toolbar{margin-top:8px;position:relative}
  type-dialog{position:absolute;left:45px;top:44px}
  hint-tip{position:absolute;left:435px;top:94px}
  forum-mark{position:absolute;right:22px;bottom:7px}`, () => {
  const marks = [[781, 325], [546, 380], [507, 563], [981, 516], [743, 428], [769, 428], [743, 556], [744, 705]];
  const ends = [[675, 427], [811, 427]];
  const outline = 'M524.500 437.500L596.500 344.500H964V687H524.500z';
  const inner = 'M547 664V446L607 366H942V664H547';
  const arc = 'M812 446A82 82 0 1 1 676 446z';
  return `<svg class="draw" aria-label="草绘截面">
  <defs>
    <g id="proj"><circle cx="1" cy="1" r="7.500" fill="#586d89" opacity=".6"/><circle r="7.500" fill="#fff"/><path d="M-6 4Q-4-4 6-5" fill="none" stroke="#444" stroke-width="1.300"/><path d="M-2 6Q-1 1 6-1" fill="none" stroke="#333" stroke-width="1.500" stroke-dasharray="2 1.500"/></g>
    <g id="endp"><circle cx="1" cy="1" r="7.500" fill="#586d89" opacity=".6"/><circle r="7.500" fill="#fff"/><path d="M-2 2L4-4" stroke="#333" stroke-width="1.300"/><circle cx="4" cy="-4" r="1.200" fill="#333"/><path d="M-4.500 1h3v3h-3z" fill="#fff" stroke="#2a9fc9"/></g>
  </defs>
  <g transform="translate(-228 -173)">
    <path d="${outline}" fill="#78b39c" stroke="#a9b840" stroke-width="3"/>
    <path d="M897 346h66v20h-66z" fill="#789bb6"/>
    <path d="${inner}" fill="none" stroke="#689db0" stroke-width="2"/>
    <path d="${inner}" fill="none" stroke="#d2a566" stroke-width="2" stroke-dasharray="4 3"/>
    <path d="${outline}" fill="none" stroke="#f6fa3c" stroke-width="2"/>
    <path d="${arc}" fill="none" stroke="#f4f838" stroke-width="2"/>
    <path d="M734 491h20M743.500 481v20" stroke="#f2f534" stroke-width="2"/>
    <path d="M743 490h1v2h-1zM675 445h2v2h-2zM811 445h2v2h-2zM963 343h2v2h-2zM595 344h2v2h-2zM523 436h2v2h-2zM523 686h2v2h-2zM963 686h2v2h-2z" fill="#4169b0"/>
    <path d="M941.500 305v28" stroke="#232c44"/><path d="M941.500 342l-2.500-11h5z" fill="#fb2f48"/>
    <path d="M941.500 380v26" stroke="#232c24" stroke-dasharray="4 3"/><path d="M941.500 370l-2 9h4z" fill="#b58a45" stroke="#20251f"/>
    <text x="912" y="360" font-family="Liberation Mono, monospace" font-size="14" fill="#243753">-20.000</text>
    ${marks.map(([x, y]) => `<use href="#proj" x="${x}" y="${y}"/>`).join('')}${ends.map(([x, y]) => `<use href="#endp" x="${x}" y="${y}"/>`).join('')}
  </g></svg>
  <view-toolbar></view-toolbar><type-dialog></type-dialog><hint-tip>选择要使用的边。</hint-tip><forum-mark></forum-mark>`;
});

define('creo-app', `:host{display:grid;grid-template-rows:auto auto auto 1fr;min-height:100vh} main{display:grid;grid-template-columns:auto 1fr;min-width:0}`,
  `<title-bar></title-bar><ribbon-tabs></ribbon-tabs><ribbon-bar></ribbon-bar><main><model-panel></model-panel><sketch-view></sketch-view></main>`);
</script>
</body>
</html>
